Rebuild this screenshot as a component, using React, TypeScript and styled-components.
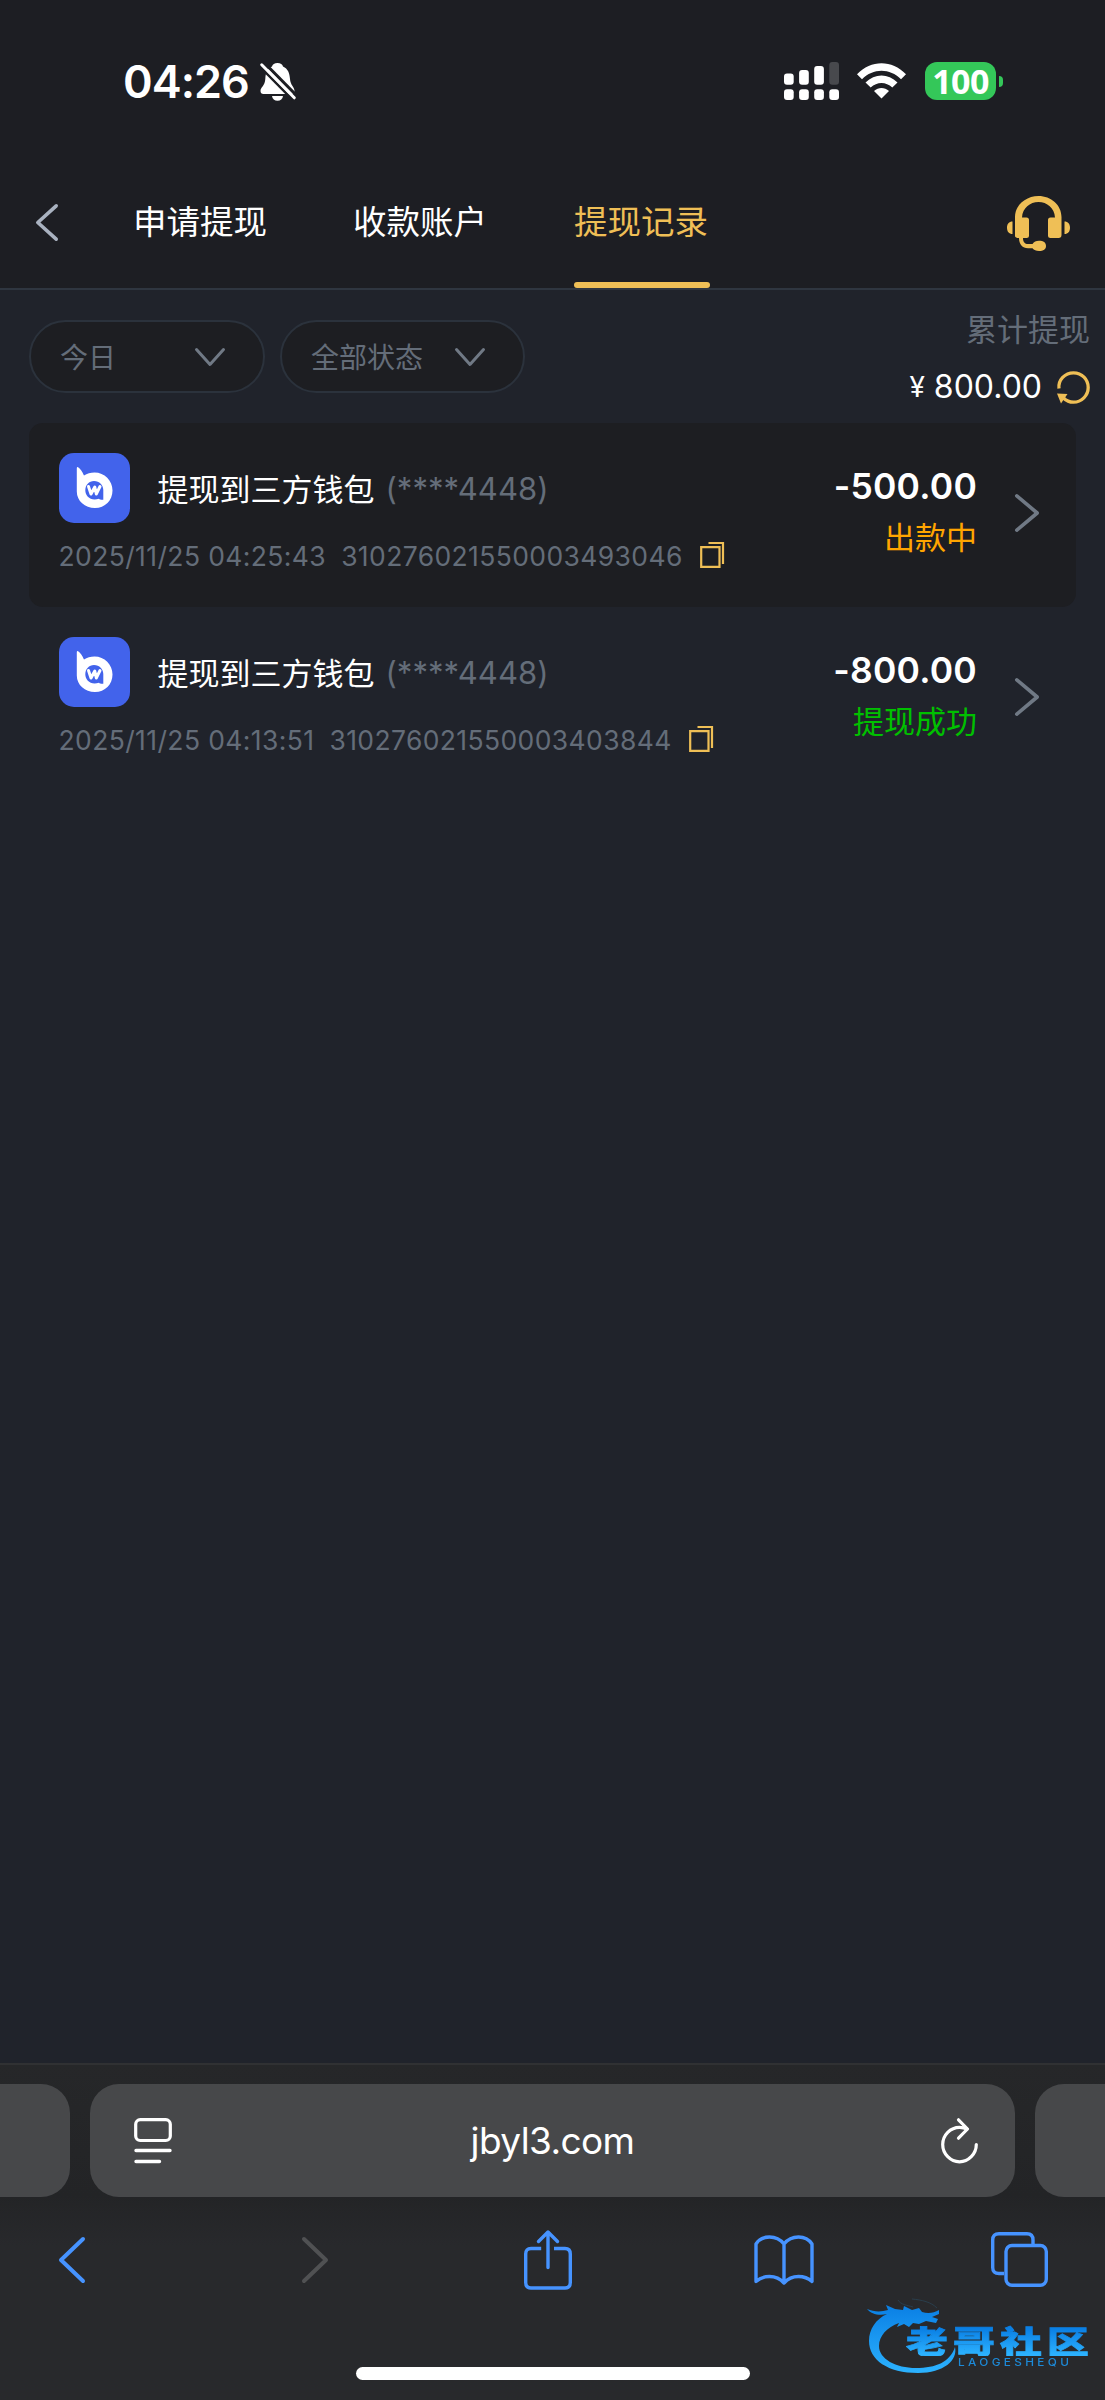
import React from 'react';
import styled, { createGlobalStyle } from 'styled-components';

const LATIN = `Inter, "Noto Sans CJK SC", sans-serif`;
const CJK = `"Noto Sans CJK SC", sans-serif`;
const GOLD = '#efbf56';
const MUTED = '#646d79';
const BLUE = '#4693ff';

const Global = createGlobalStyle`
  body { margin: 0; background: #20232b; }
  * { box-sizing: border-box; }
  svg { display: block; flex: none; overflow: visible; }
`;

const Screen = styled.div`
  width: 1105px;
  height: 2400px;
  display: flex;
  flex-direction: column;
  background: #20232b;
  color: #fff;
  font-family: ${LATIN};
  overflow: hidden;
  position: relative;
  white-space: nowrap;
`;

const Header = styled.header`
  background: #1d1e23;
  border-bottom: 2px solid #2f3640;
`;

const StatusBar = styled.div`
  height: 156px;
  padding: 6px 102px 0 123px;
  display: flex;
  align-items: center;
`;

const Clock = styled.span`
  padding-top: 2px;
  font-size: 45px;
  font-weight: 600;
  line-height: 54px;
  letter-spacing: -1px;
  width: 137px;
`;

const StatusIcons = styled.div`
  margin-left: auto;
  display: flex;
  align-items: center;
`;

const Battery = styled.div`
  width: 71px;
  height: 38px;
  margin-left: 19px;
  border-radius: 12px;
  background: #34c759;
  font: 700 34px/38px "Noto Sans", sans-serif;
  letter-spacing: -0.6px;
  text-align: center;
`;

const BatteryCap = styled.div`
  width: 4px;
  height: 11px;
  margin-left: 3px;
  border-radius: 0 4px 4px 0;
  background: #34c759;
`;

const NavRow = styled.nav`
  height: 132px;
  padding: 0 35px 0 36px;
  display: flex;
  align-items: center;
`;

const Tabs = styled.div`
  margin-left: 76px;
  display: flex;
  gap: 84px;
  height: 100%;
`;

const Tab = styled.div<{ $active?: boolean }>`
  width: 136px;
  height: 100%;
  display: flex;
  flex-direction: column;
  justify-content: space-between;
  font: 400 33.5px/128px ${CJK};
  text-indent: ${p => (p.$active ? 0 : -1)}px;
  color: ${p => (p.$active ? GOLD : '#fff')};
  &::after {
    content: '';
    height: 6px;
    margin-top: -2px;
    border-radius: 3px;
    background: ${p => (p.$active ? GOLD : 'transparent')};
  }
`;

const Support = styled.div`
  margin-left: auto;
  padding-top: 3px;
`;

const FilterBar = styled.section`
  height: 133px;
  padding: 0 15px 0 29px;
  display: flex;
  justify-content: space-between;
`;

const Filters = styled.div`
  display: flex;
  gap: 15px;
  padding-top: 30px;
`;

const Select = styled.div<{ $width: number }>`
  width: ${p => p.$width}px;
  height: 73px;
  padding: 0 38px 0 29px;
  border: 2px solid #2b323c;
  border-radius: 37px;
  background: #1d1e22;
  display: flex;
  align-items: center;
  justify-content: space-between;
  font: 400 28px/71px ${CJK};
  color: ${MUTED};
`;

const Summary = styled.div`
  padding-top: 18px;
  display: flex;
  flex-direction: column;
  align-items: flex-end;
  gap: 19px;
`;

const SummaryLabel = styled.div`
  font: 400 31px/40px ${CJK};
  color: ${MUTED};
`;

const SummaryValue = styled.div`
  display: flex;
  align-items: center;
  font-size: 32px;
  line-height: 40px;
`;

const Yen = styled.span`
  font-size: 28px;
  margin-right: 9px;
`;

const Total = styled.span`
  margin-right: 15px;
`;

const List = styled.main`
  flex: 1;
  padding: 0 29px;
`;

const Card = styled.article<{ $shaded?: boolean }>`
  height: 184px;
  padding: 30px 37px 0 29.5px;
  border-radius: 14px;
  background: ${p => (p.$shaded ? '#1d1e22' : 'transparent')};
  display: flex;
`;

const Info = styled.div`
  flex: 1;
`;

const TitleRow = styled.div`
  height: 70px;
  display: flex;
  align-items: center;
`;

const Title = styled.span`
  margin-left: 28px;
  padding-bottom: 1px;
  font: 400 31px/46px ${CJK};
`;

const Account = styled.span`
  margin-left: 11px;
  padding-top: 1px;
  font-size: 31px;
  line-height: 46px;
  letter-spacing: 0.05px;
  color: ${MUTED};
`;

const Meta = styled.div`
  margin-top: 15px;
  display: flex;
  align-items: center;
  font-size: 26.5px;
  line-height: 36px;
  letter-spacing: 0.38px;
  color: ${MUTED};
  svg { margin: -3px 0 0 17px; }
`;

const Serial = styled.span`
  margin-left: 15px;
`;

const Result = styled.div`
  margin-right: 38px;
  text-align: right;
`;

const Amount = styled.div`
  margin-top: 12px;
  font-size: 35.5px;
  font-weight: 600;
  line-height: 44px;
  letter-spacing: 0.2px;
`;

const State = styled.div<{ $color: string }>`
  margin-top: 5px;
  font: 400 31px/44px ${CJK};
  color: ${p => p.$color};
`;

const Go = styled.div`
  padding-top: 41px;
`;

const Browser = styled.footer`
  height: 337px;
  border-top: 2px solid #303133;
  background: linear-gradient(#262729, #232426 130px, #28292c 180px, #28292c);
`;

const Pages = styled.div`
  display: flex;
  gap: 20px;
  margin-top: 19px;
`;

const PageEdge = styled.div<{ $side: 'left' | 'right' }>`
  width: 70px;
  height: 113px;
  background: #47484a;
  border-radius: ${p => (p.$side === 'left' ? '0 29px 29px 0' : '29px 0 0 29px')};
`;

const Address = styled.div`
  flex: 1;
  height: 113px;
  padding: 0 37px 0 44px;
  border-radius: 29px;
  background: #47484a;
  display: flex;
  align-items: center;
  justify-content: space-between;
`;

const Url = styled.span`
  padding: 1px 8px 0 0;
  font-size: 37px;
  line-height: 48px;
  letter-spacing: -0.6px;
`;

const Tools = styled.div`
  height: 125px;
  display: grid;
  grid-template-columns: 144px 342px 124px 348px 122px;
  align-items: center;
  justify-items: center;
`;

const HomeBar = styled.div`
  width: 394px;
  height: 13px;
  margin: 45px auto 0;
  border-radius: 7px;
  background: #fff;
`;

const Watermark = styled.div`
  position: absolute;
  left: 866px;
  top: 2298px;
  width: 230px;
  height: 80px;
`;

const Brand = styled.div`
  position: absolute;
  left: 40px;
  top: 26px;
  font: 900 31px/32px ${CJK};
  letter-spacing: 3.8px;
  transform: scaleX(1.35);
  transform-origin: 0 0;
  background: linear-gradient(#0a7fe4 15%, #2cb2ff 95%);
  -webkit-background-clip: text;
  background-clip: text;
  -webkit-text-stroke: 0.8px transparent;
  color: transparent;
`;

const BrandLatin = styled.div`
  position: absolute;
  left: 92px;
  top: 59px;
  font: 500 10.5px/12px Inter, sans-serif;
  letter-spacing: 3px;
  transform: scaleX(1.12);
  transform-origin: 0 0;
  color: #1d8ad8;
`;

const stroke = (color: string, width: number) => ({
  fill: 'none',
  stroke: color,
  strokeWidth: width,
  strokeLinecap: 'round' as const,
  strokeLinejoin: 'round' as const,
});

const BellOff = () => (
  <svg width="36" height="39" viewBox="0 0 36 39">
    <path d="M17.500 1C20.500 1 22.500 2.300 23 4.500C28 6.800 29.500 11 30 17C30.300 23 34.500 25 34.500 29C34.500 31 33.500 32 31.500 32H3.500C1.500 32 .5 31 .5 29C.5 25 5 24 5.300 17C5.600 11 7 6.800 12 4.500C12.600 2.300 14.500 1 17.500 1Z" fill="#fff" />
    <path d="M12 34H23C22.700 37 20.500 38.700 17.500 38.700S12.300 37 12 34Z" fill="#fff" />
    <path d="M0 4.500L33 38" stroke="#1d1e23" strokeWidth="2.600" />
    <path d="M3.500 0L38 35" stroke="#1d1e23" strokeWidth="3.200" />
    <path d="M1.700 2.800L34.300 35.800" {...stroke('#fff', 3)} />
  </svg>
);

const Signal = () => (
  <svg width="55" height="38" viewBox="0 0 55 38">
    {[11.5, 8, 4, 0].map((y, i) => (
      <g key={i}>
        <rect x={i * 15.1} y={y} width="9.700" height={22.8 - y} rx="3" fill={i === 3 ? '#48494d' : '#fff'} />
        <rect x={i * 15.1} y="27.300" width="9.700" height="10.700" rx="3" fill="#fff" />
      </g>
    ))}
  </svg>
);

const WifiSlot = styled.div`
  margin-left: 18.5px;
`;

const Wifi = () => (
  <WifiSlot>
    <svg width="49" height="36" viewBox="0 0 49 36">
      <path d="M0 11.300C14 -3.600 35 -3.600 49 11.300L44 16.200C33 4.800 16 4.800 5 16.200Z" fill="#fff" />
      <path d="M8.500 19.500C18 10.300 31 10.300 40.500 19.500L35.300 24.600C29 18.600 20 18.600 13.700 24.600Z" fill="#fff" />
      <path d="M17 28C21.500 23.900 27.500 23.900 32 28L24.500 35.500Z" fill="#fff" />
    </svg>
  </WifiSlot>
);

const Headset = () => (
  <svg width="63" height="55" viewBox="0 0 63 55" fill={GOLD}>
    <path d="M8 40V21C8 9 19 0 31.500 0S54.500 9 54.500 21V39Q54.500 42 51.500 42H43.500Q41 42 41 39.500V24Q41 21.500 43.500 21.500H48C47.500 12 40 6 31.500 6S15.500 12 15 21.500H19.500Q22 21.500 22 24V39.500Q22 42 19.500 42H16C16 46 18 48 21 48H25.500C27 45.700 29 44.800 32 44.800C36.500 44.800 39 46.700 39 50S36.500 55 32 55C29 55 27 54.200 25.500 52.300H21C15.500 52.300 12 48.500 12 42Q8 42 8 40Z" />
    <path d="M5.500 25.500V38C2 38 0 35.500 0 31.700S2 25.500 5.500 25.500ZM57.500 25.500V38C61 38 63 35.500 63 31.700S61 25.500 57.500 25.500Z" />
  </svg>
);

const ChevronDown = () => (
  <svg width="30" height="18" viewBox="0 0 30 18">
    <path d="M1.500 1.500L15 16.500L28.500 1.500" {...stroke('#707985', 3)} />
  </svg>
);

const Reload = () => (
  <svg width="33" height="33" viewBox="0 0 33 33">
    <path d="M2 17.500C1 9 8 1.800 16.500 1.800S31.200 8.500 31.200 16.500S24.500 31.200 16.500 31.200C12.500 31.200 9 29.500 6.500 27" fill="none" stroke={GOLD} strokeWidth="3.300" />
    <path d="M0 22.500L10.500 23L4 32.500Z" fill={GOLD} />
  </svg>
);

const Wallet = () => (
  <svg width="71" height="70" viewBox="0 0 71 70">
    <rect width="71" height="70" rx="15" fill="#4263eb" />
    <path d="M18.500 14C21 15 23.500 19 25 22.500C28 20.500 31.500 19.500 35.500 19.500C45.500 19.500 53.500 27.500 53.500 37.500S46 55 36 55C26 55 17.800 48 17.800 38.500V15.500Q17.800 13.700 18.500 14Z" fill="#fff" />
    <path d="M35 28C40.500 28 44.300 32 44.300 37V46.800C42.300 47 40.500 46.500 40 45.700C32 48.500 26.300 43.500 26.300 37.300C26.300 32 30 28 35 28Z" fill="#4263eb" />
    <path d="M29.500 33.500L32 41L35.800 34L37.300 41L41 33.500" {...stroke('#fff', 3)} />
  </svg>
);

const Copy = () => (
  <svg width="24" height="26" viewBox="0 0 24 26">
    <path d="M1.200 5.200H19.500V24.800H1.200Z M8.500 1H23V22" fill="none" stroke={GOLD} strokeWidth="2.200" />
  </svg>
);

const Chevron = ({ w, h, color, width, left }: { w: number; h: number; color: string; width: number; left?: boolean }) => {
  const m = width / 2;
  const d = left ? `M${w - m} ${m}L${m} ${h / 2}L${w - m} ${h - m}` : `M${m} ${m}L${w - m} ${h / 2}L${m} ${h - m}`;
  return (
    <svg width={w} height={h} viewBox={`0 0 ${w} ${h}`}>
      <path d={d} {...stroke(color, width)} />
    </svg>
  );
};

const ReaderIcon = () => (
  <svg width="38" height="46" viewBox="0 0 38 46">
    <rect x="1.700" y="1.700" width="34.600" height="20.800" rx="4.500" {...stroke('#fff', 3.2)} />
    <path d="M2 32.500H36M2 43.500H25.500" {...stroke('#fff', 3.4)} />
  </svg>
);

const RefreshIcon = () => (
  <svg width="37" height="46" viewBox="0 0 37 46">
    <path d="M26 11C23.500 9.700 21 9.300 18.500 9.300C9.500 9.300 1.700 17 1.700 26.500S9.500 43.800 18.500 43.800S35.300 36 35.300 26.500" {...stroke('#fff', 3.2)} />
    <path d="M17.500 1.800L26.500 11L17.500 20.200" {...stroke('#fff', 3.2)} />
  </svg>
);

const Share = () => (
  <svg width="48" height="60" viewBox="0 0 48 60">
    <path d="M17.200 18.500H7Q1.700 18.500 1.700 24V52.500Q1.700 58 7 58H41Q46.300 58 46.300 52.500V24Q46.300 18.500 41 18.500H30" {...stroke(BLUE, 3.4)} strokeLinecap="butt" />
    <path d="M24 37.500V2M14.500 11.500L24 2L33.500 11.500" {...stroke(BLUE, 3.4)} />
  </svg>
);

const Book = () => (
  <svg width="60" height="50" viewBox="0 0 60 50">
    <path d="M30 9C26 4 21 2 15.500 2C9.500 2 5 4.500 2 9V46.500C6 43 10.500 41.500 15.500 41.500C21 41.500 26 43.500 30 48C34 43.500 39 41.500 44.500 41.500C49.500 41.500 54 43 58 46.500V9C55 4.500 50.500 2 44.500 2C39 2 34 4 30 9ZM30 9V48" {...stroke(BLUE, 3.4)} />
  </svg>
);

const TabsIcon = () => (
  <svg width="57" height="55" viewBox="0 0 57 55">
    <path d="M13 41.500H8Q1.700 41.500 1.700 35.500V8Q1.700 1.700 8 1.700H36Q42 1.700 42 8V12" {...stroke(BLUE, 3.4)} strokeLinecap="butt" />
    <rect x="15" y="13.500" width="40.300" height="39.800" rx="6" {...stroke(BLUE, 3.4)} />
  </svg>
);

const Dragon = () => (
  <svg width="230" height="80" viewBox="0 0 230 80">
    <defs>
      <linearGradient id="dragon" x1="0" y1="0" x2="0" y2="1">
        <stop offset="0" stopColor="#0a7fe4" />
        <stop offset="1" stopColor="#2cb2ff" />
      </linearGradient>
    </defs>
    <path fill="url(#dragon)" d="M1 11C8 14 15 14 22 12L20 7L29 11L37 12L38 8L46 12L53 10L56 14C62 16 68 15 73 12L73 16L66 19L72 21L70 25L60 23L53 26L47 25L43 29L38 26L31 29L33 25C21 29 13 38 13 48C13 61 30 70 50 70C70 70 84 64 89 49C92 62 78 75 52 75C22 75 3 62 3 43C3 31 10 21 21 16C13 18 5 16 1 11Z" />
    <path fill="none" stroke="#294254" strokeWidth="0.800" d="M32 2C35 7 41 7 47 9M46 1C56 2 65 4 71 10" />
  </svg>
);

const records = [
  { amount: '-500.00', state: '出款中', color: '#ffa500', time: '2025/11/25 04:25:43', serial: '310276021550003493046' },
  { amount: '-800.00', state: '提现成功', color: '#00c000', time: '2025/11/25 04:13:51', serial: '310276021550003403844' },
];

export default function App() {
  return (
    <Screen>
      <Global />
      <Header>
        <StatusBar>
          <Clock>04:26</Clock>
          <BellOff />
          <StatusIcons>
            <Signal />
            <Wifi />
            <Battery>100</Battery>
            <BatteryCap />
          </StatusIcons>
        </StatusBar>
        <NavRow>
          <Chevron left w={22} h={37} color="#a9b2c0" width={3.6} />
          <Tabs>
            <Tab>申请提现</Tab>
            <Tab>收款账户</Tab>
            <Tab $active>提现记录</Tab>
          </Tabs>
          <Support><Headset /></Support>
        </NavRow>
      </Header>
      <FilterBar>
        <Filters>
          <Select $width={236}>今日<ChevronDown /></Select>
          <Select $width={245}>全部状态<ChevronDown /></Select>
        </Filters>
        <Summary>
          <SummaryLabel>累计提现</SummaryLabel>
          <SummaryValue>
            <Yen>¥</Yen>
            <Total>800.00</Total>
            <Reload />
          </SummaryValue>
        </Summary>
      </FilterBar>
      <List>
        {records.map((r, i) => (
          <Card key={r.serial} $shaded={i % 2 === 0}>
            <Info>
              <TitleRow>
                <Wallet />
                <Title>提现到三方钱包</Title>
                <Account>(****4448)</Account>
              </TitleRow>
              <Meta>
                <span>{r.time}</span>
                <Serial>{r.serial}</Serial>
                <Copy />
              </Meta>
            </Info>
            <Result>
              <Amount>{r.amount}</Amount>
              <State $color={r.color}>{r.state}</State>
            </Result>
            <Go><Chevron w={24} h={38} color="#707985" width={3.6} /></Go>
          </Card>
        ))}
      </List>
      <Browser>
        <Pages>
          <PageEdge $side="left" />
          <Address>
            <ReaderIcon />
            <Url>jbyl3.com</Url>
            <RefreshIcon />
          </Address>
          <PageEdge $side="right" />
        </Pages>
        <Tools>
          <Chevron left w={26} h={46} color={BLUE} width={4} />
          <Chevron w={26} h={46} color="#505153" width={4} />
          <Share />
          <Book />
          <TabsIcon />
        </Tools>
        <HomeBar />
      </Browser>
      <Watermark>
        <Dragon />
        <Brand>老哥社区</Brand>
        <BrandLatin>LAOGESHEQU</BrandLatin>
      </Watermark>
    </Screen>
  );
}
